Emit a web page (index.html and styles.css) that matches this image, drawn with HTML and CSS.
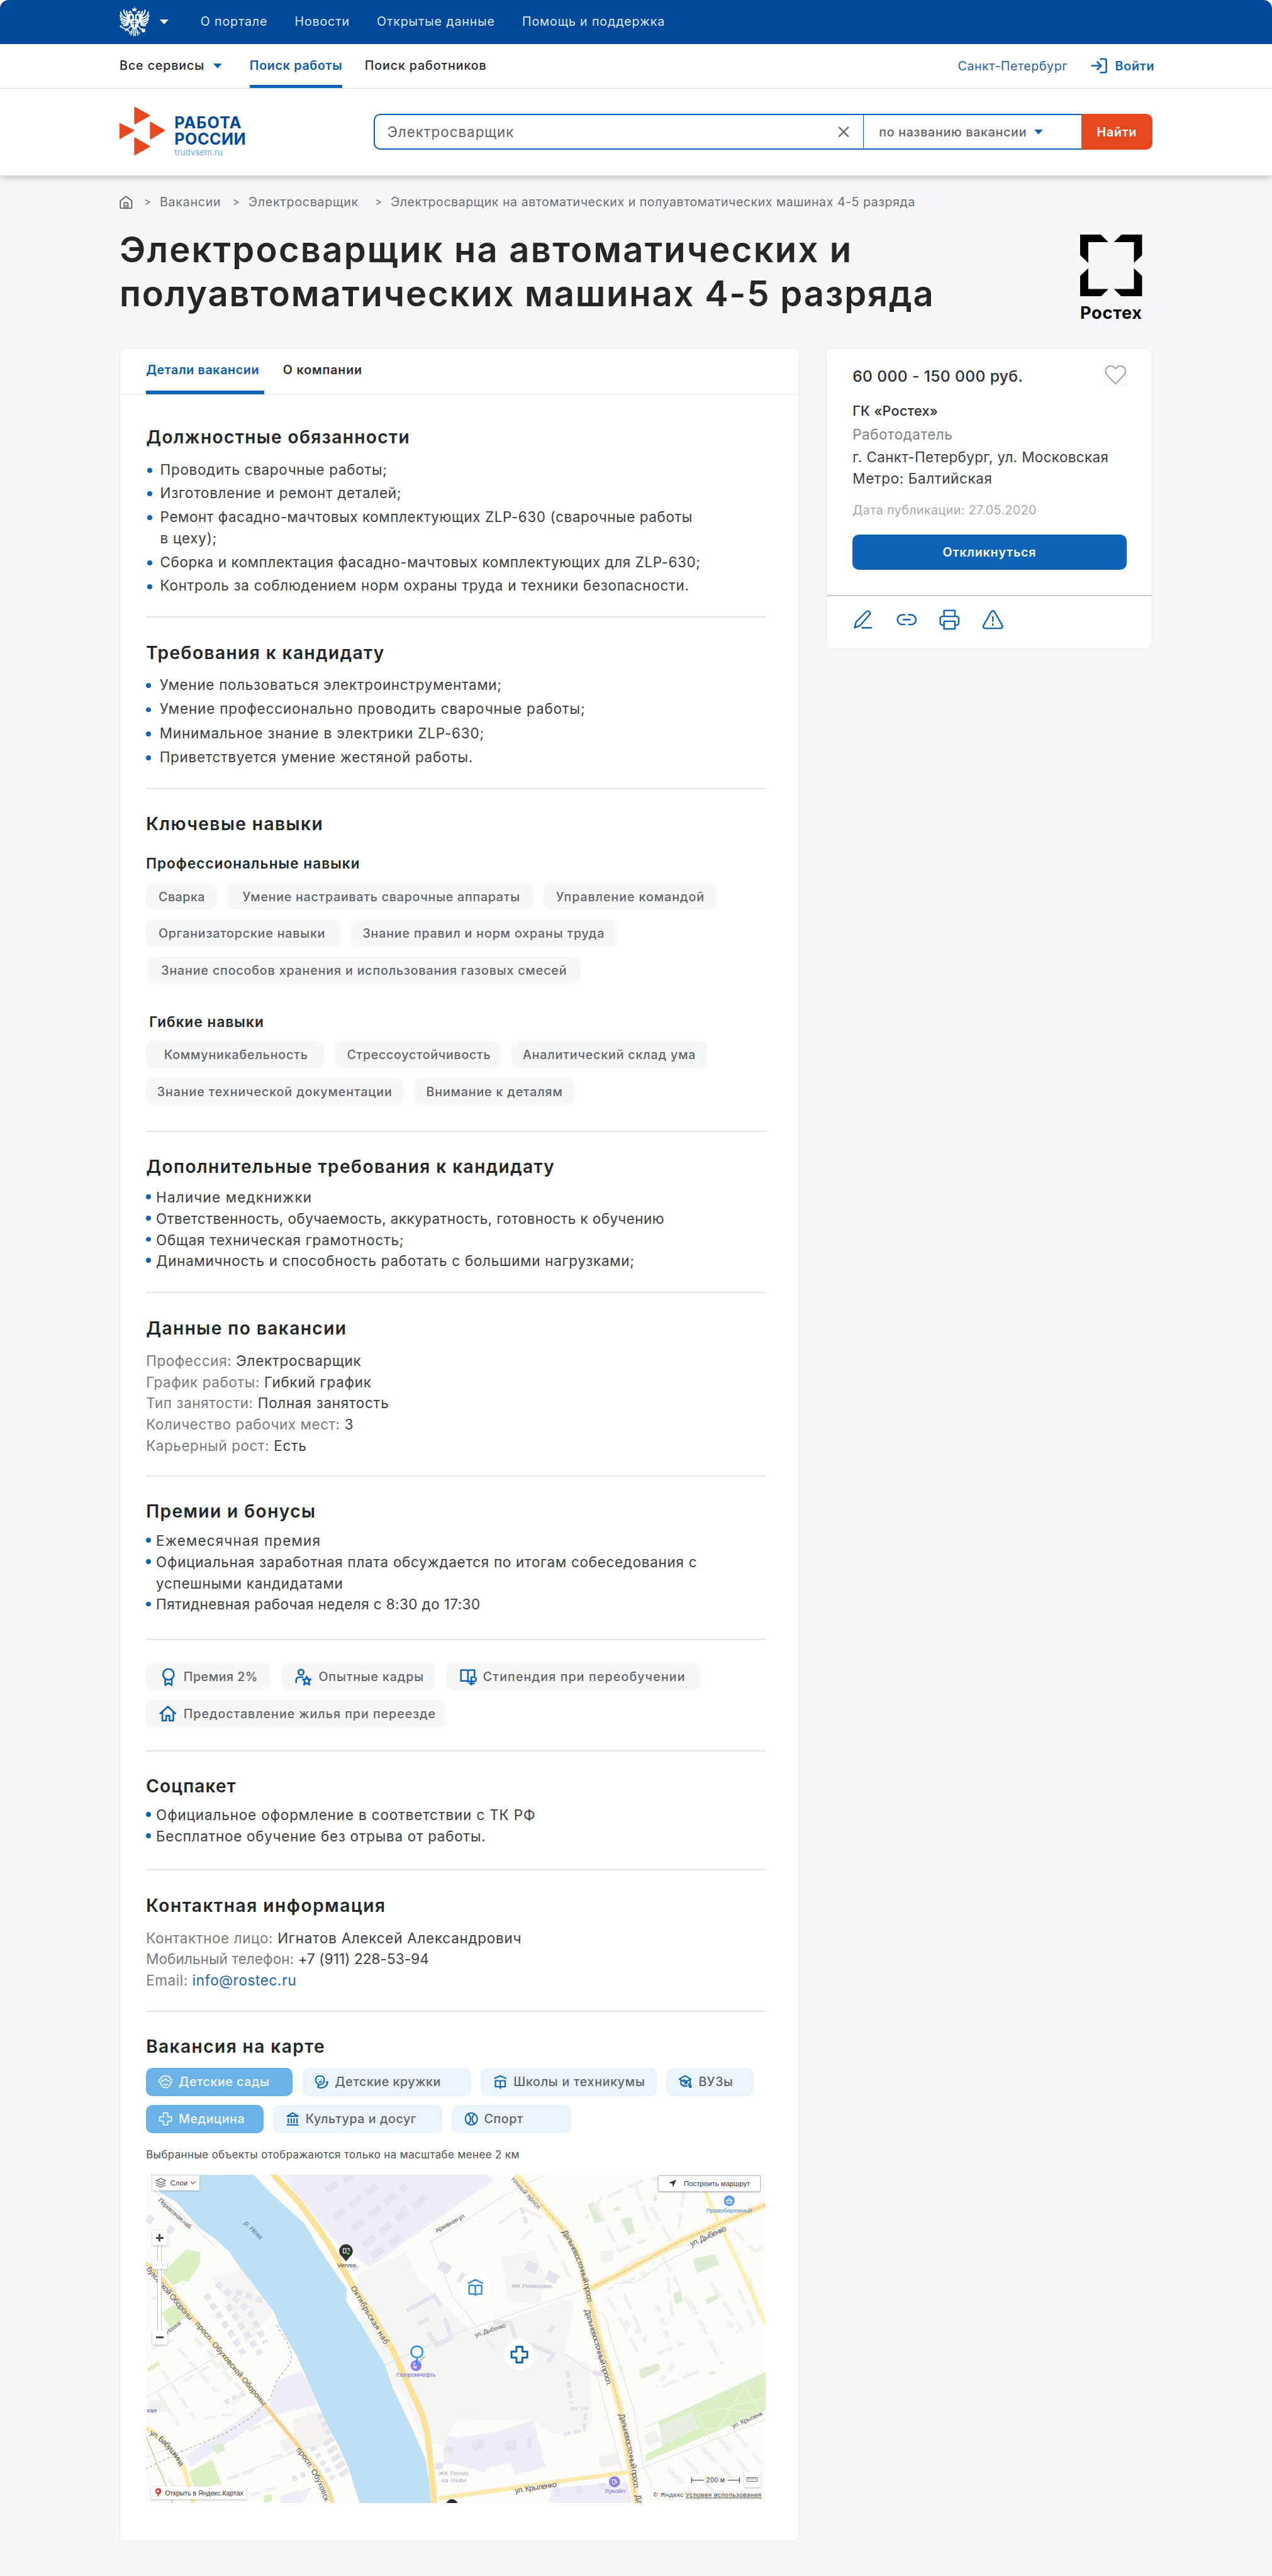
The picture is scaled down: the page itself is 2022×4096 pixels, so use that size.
FILE: index.html
```html
<!DOCTYPE html>
<html lang="ru">
<head>
<meta charset="utf-8">
<title>Работа России — Электросварщик</title>
<link rel="stylesheet" href="styles.css">
</head>
<body>
<div class="page">
  <header class="header">
    <div class="topbar">
      <svg class="eagle" viewBox="0 0 56 57" fill="none" stroke="#f3f6fb" stroke-linecap="round">
        <g id="half">
          <path stroke-width="2.6" d="M2 11c1 6 4 9 11 11M1 17c2 6 6 8 12 9M2 24c3 4 7 5 12 5M4 30c3 3 6 3 10 2M7 35c3 1 5 1 8-1M8 7c0 6 3 10 9 12M13 9c0 4 2 7 6 9"/>
          <path stroke-width="3.4" d="M14 20c2 4 2 9 1 14M18 19c-1 6 0 9 3 12"/>
          <path stroke-width="3" d="M25 32V19c0-3-2-4-5-4l-3 1"/>
          <path stroke-width="2.2" d="M17 11h5M19.500 9v2.500M22 14l3 2"/>
          <path stroke-width="2" d="M22 35c-3 3-5 6-7 8M24 42c-1 4-4 6-6 8M26 44v10M23 46c0 3-1 5-2 7M14 41l-3 4"/>
        </g>
        <use href="#half" transform="matrix(-1 0 0 1 55 0)"/>
        <path stroke-width="2" d="M2.500 37.500L18 46"/>
        <path fill="#f3f6fb" stroke-width="1" d="M24 4.500h7l-1 4h-5zM27.500 1v3M21 24h13v11c0 4-4 6-6.500 8-2.500-2-6.500-4-6.500-8z"/>
        <circle cx="2.500" cy="37" r="2" fill="#f3f6fb" stroke="none"/>
        <circle cx="44" cy="44.500" r="3.400" fill="#f3f6fb" stroke="none"/>
        <path stroke="#00489a" stroke-width="1.400" d="M24.500 28h6M24.500 32h6M27.500 26v12"/>
      </svg>
      <svg class="caret caret-light" viewBox="0 0 16 9"><path d="M0 0h16l-8 9z" fill="#fff"/></svg>
      <nav class="topnav"><a>О портале</a><a>Новости</a><a>Открытые данные</a><a>Помощь и поддержка</a></nav>
    </div>
    <div class="services">
      <a class="service">Все сервисы</a>
      <svg class="caret caret-blue" viewBox="0 0 16 9"><path d="M0 0h16l-8 9z" fill="#0d64b6"/></svg>
      <a class="service service-active">Поиск работы</a>
      <a class="service">Поиск работников</a>
      <a class="city">Санкт-Петербург</a>
      <svg class="login-icon" viewBox="0 0 30 29" fill="none" stroke="#0d64b6" stroke-width="3" stroke-linecap="round" stroke-linejoin="round"><path d="M18 2h7.500a3 3 0 0 1 3 3v19a3 3 0 0 1-3 3H18M2 14.500h17M12 7.500l7 7-7 7"/></svg>
      <a class="login">Войти</a>
    </div>
    <div class="search-row">
      <div class="logo">
        <svg class="logo-mark" viewBox="0 0 84 89" fill="#e5481f"><path d="M27 1.500v29a1.500 1.500 0 0 0 2.500 1L56 16.500a1 1 0 0 0 0-1.500L29.500.5a1.500 1.500 0 0 0-2.500 1zM0 29.500v30l27-15.500a1 1 0 0 0 0-1.500zM56 28v31a1 1 0 0 0 1.500.5l26-15.500a1 1 0 0 0 0-1.500l-26-15a1 1 0 0 0-1.500.5zM27 57v31a1 1 0 0 0 2 .5l27-15a1 1 0 0 0 0-1.500L29 56.500a1.500 1.500 0 0 0-2 .5z"/></svg>
        <div class="logo-text"><div class="logo-a">РАБОТА</div><div class="logo-b">РОССИИ</div><div class="logo-site">trudvsem.ru</div></div>
      </div>
      <div class="search">
        <div class="search-field"><span>Электросварщик</span>
          <svg class="clear" viewBox="0 0 21 20" stroke="#63676c" stroke-width="2.600"><path d="M1.500 1l18 18M19.500 1l-18 18"/></svg></div>
        <div class="search-by"><span>по названию вакансии</span><svg class="caret" viewBox="0 0 16 9"><path d="M0 0h16l-8 9z" fill="#0d64b6"/></svg></div>
        <button class="search-btn">Найти</button>
      </div>
    </div>
  </header>

  <main class="main">
    <nav class="crumbs">
      <svg class="home" viewBox="0 0 24 25" fill="none" stroke="#63676c" stroke-width="2.300" stroke-linejoin="round"><path d="M1.500 9.500L12 1.500l10.500 8v12a2 2 0 0 1-2 2h-17a2 2 0 0 1-2-2zM8.500 23.500v-9a1.500 1.500 0 0 1 1.500-1.500h4a1.500 1.500 0 0 1 1.500 1.500v9M12 17v6"/></svg>
      <span class="sep">&gt;</span><a class="c1">Вакансии</a><span class="sep">&gt;</span><a class="c2">Электросварщик</a><span class="sep">&gt;</span><a class="c3">Электросварщик на автоматических и полуавтоматических машинах 4-5 разряда</a>
    </nav>
    <div class="title-row">
      <h1><span class="t1">Электросварщик на автоматических и</span><br>полуавтоматических машинах 4-5 разряда</h1>
      <div class="company-logo">
        <svg viewBox="0 0 114 114"><path d="M0 0h38l14 14H15v38L0 38zM114 0H76L62 14h37v38l15-14zM0 114h38l14-14H15V62L0 76zM114 114H76l-14-14h37V62l15 14z"/></svg>
        <div>Ростех</div>
      </div>
    </div>

    <div class="columns">
      <article class="card details">
        <div class="tabs"><a class="tab tab-active">Детали вакансии</a><a class="tab">О компании</a></div>

        <section class="section s-duties">
          <h2>Должностные обязанности</h2>
          <ul class="list list-wide">
            <li>Проводить сварочные работы;</li><li>Изготовление и ремонт деталей;</li>
            <li><span class="snug">Ремонт фасадно-мачтовых комплектующих ZLP-630 (сварочные работы</span><br>в цеху);</li>
            <li><span class="snug">Сборка и комплектация фасадно-мачтовых комплектующих для ZLP-630;</span></li>
            <li>Контроль за соблюдением норм охраны труда и техники безопасности.</li>
          </ul>
        </section>
        <section class="section s-req">
          <h2>Требования к кандидату</h2>
          <ul class="list list-wide">
            <li>Умение пользоваться электроинструментами;</li><li class="loose">Умение профессионально проводить сварочные работы;</li>
            <li class="loose">Минимальное знание в электрики ZLP-630;</li><li>Приветствуется умение жестяной работы.</li>
          </ul>
        </section>
        <section class="section s-skills">
          <h2>Ключевые навыки</h2>
          <h3>Профессиональные навыки</h3>
          <div class="chips chips-pro"><span>Сварка</span><span>Умение настраивать сварочные аппараты</span><span>Управление командой</span><span>Организаторские навыки</span><span>Знание правил и норм охраны труда</span><span>Знание способов хранения и использования газовых смесей</span></div>
          <h3 class="h3-soft">Гибкие навыки</h3>
          <div class="chips chips-soft"><span>Коммуникабельность</span><span>Стрессоустойчивость</span><span>Аналитический склад ума</span><span>Знание технической документации</span><span>Внимание к деталям</span></div>
        </section>
        <section class="section s-extra">
          <h2>Дополнительные требования к кандидату</h2>
          <ul class="list">
            <li class="airy">Наличие медкнижки</li><li class="tight">Ответственность, обучаемость, аккуратность, готовность к обучению</li><li>Общая техническая грамотность;</li><li>Динамичность и способность работать с большими нагрузками;</li>
          </ul>
        </section>
        <section class="section s-data">
          <h2>Данные по вакансии</h2>
          <dl class="props">
            <div><dt>Профессия:</dt> <dd>Электросварщик</dd></div><div><dt>График работы:</dt> <dd>Гибкий график</dd></div><div><dt>Тип занятости:</dt> <dd>Полная занятость</dd></div><div><dt>Количество рабочих мест:</dt> <dd>3</dd></div><div><dt>Карьерный рост:</dt> <dd>Есть</dd></div>
          </dl>
        </section>
        <section class="section s-bonus">
          <h2>Премии и бонусы</h2>
          <ul class="list">
            <li class="airy">Ежемесячная премия</li><li>Официальная заработная плата обсуждается по итогам собеседования с<br>успешными кандидатами</li><li class="tight">Пятидневная рабочая неделя с 8:30 до 17:30</li>
          </ul>
        </section>
        <section class="section s-benefits">
          <div class="chips chips-icons">
            <span><svg viewBox="0 0 32 34"><circle cx="16" cy="12" r="10"/><path d="M10 20v12l6-4 6 4V20"/></svg>Премия 2%</span>
            <span><svg viewBox="0 0 32 34"><circle cx="11" cy="8" r="5"/><path d="M2 27v-4c0-4 3-6 8-6h4M21.500 16l2 5h5l-3.500 4 1.500 6-5-3-5 3 1.500-6-3.500-4h5z"/></svg>Опытные кадры</span>
            <span><svg viewBox="0 0 32 34"><path d="M14 24H2V4h9c2 0 4 1 4 3v19M15 7c0-2 2-3 4-3h8v10M21 31V17h5a4 4 0 0 1 0 8h-8M18 29h8"/></svg>Стипендия при переобучении</span>
            <span><svg viewBox="0 0 32 34"><path d="M2 17L16 4l14 13M6 14v16h7v-9h6v9h7V14"/></svg>Предоставление жилья при переезде</span>
          </div>
        </section>
        <section class="section s-social">
          <h2>Соцпакет</h2>
          <ul class="list"><li class="loose">Официальное оформление в соответствии с ТК РФ</li><li>Бесплатное обучение без отрыва от работы.</li></ul>
        </section>
        <section class="section s-contacts">
          <h2>Контактная информация</h2>
          <dl class="props"><div><dt>Контактное лицо:</dt> <dd>Игнатов Алексей Александрович</dd></div><div class="phone"><dt>Мобильный телефон:</dt> <dd>+7 (911) 228-53-94</dd></div><div class="email"><dt>Email:</dt> <dd><a>info@rostec.ru</a></dd></div></dl>
        </section>
        <section class="section s-map">
          <h2>Вакансия на карте</h2>
          <div class="pills">
            <span class="on"><svg viewBox="0 0 26 26"><path d="M4 8a3.500 3.500 0 0 0 0 7c1 6 4.500 9 9 9s8-3 9-9a3.500 3.500 0 0 0 0-7c-1-4-4.500-6-9-6S5 4 4 8zM4 12c4 0 7-2 9-5 2 3 5 5 9 5M9 17c2 2 6 2 8 0"/></svg>Детские сады</span>
            <span><svg viewBox="0 0 26 26"><path d="M8 18C4 16 2 13 2 9c0-4 3-7 8-7s8 3 8 7c0 5-3 8-7 9-3 1-5 2-5 4s3 2 6 2c7 0 12-5 12-11l-3 1M7 8v1M13 8v1M8 13c2 1 4 0 5-2"/></svg>Детские кружки</span>
            <span><svg viewBox="0 0 26 26"><path d="M2 7l11-5 11 5M4 11h6c2 0 3 1 3 2 0-1 1-2 3-2h6v11h-6c-2 0-3 1-3 3 0-2-1-3-3-3H4zM13 13v9"/></svg>Школы и техникумы</span>
            <span><svg viewBox="0 0 26 26"><path d="M2 8l11-6 10 6-10 6zM5 11v6c4 4 8 5 12 3M9 9l7 3v4l-4 1M22 9v7l-3 2M22 16l2 8M19 18l3 6"/></svg>ВУЗы</span>
            <span class="on"><svg viewBox="0 0 26 26"><path d="M9 2h8v7h7v8h-7v7H9v-7H2V9h7z"/></svg>Медицина</span>
            <span><svg viewBox="0 0 26 26"><path d="M3 8l10-6 10 6zM5 12v9M10.500 12v9M15.500 12v9M21 12v9M2 24h22"/></svg>Культура и досуг</span>
            <span><svg viewBox="0 0 26 26"><circle cx="13" cy="13" r="11"/><path d="M7 4c6 5 6 13 0 18M19 4c-6 5-6 13 0 18"/></svg>Спорт</span>
          </div>
          <p class="map-note">Выбранные объекты отображаются только на масштабе менее 2 км</p>
          <div class="map">
            <svg class="map-canvas" viewBox="0 0 1140 604">
              <rect width="1140" height="604" fill="#fdfbf8"/>
              <g fill="#efedf6">
                <path d="M248 0H628L640 12 592 42 470 128 412 171 347 122 298 61z"/>
                <path d="M240 380l46-19 27 43v20l-92 21zM72 518l145-98 12 21L83 537z"/>
                <path d="M571 485l72-12 71-21 21 86-57 14-8-22-40 8-5 10-54-14zM747 576l139-10 8 38H740zM547 482h24v50h-24zM247 590l60-15-20 29h-40z"/>
              </g>
              <g fill="#f5f5f3">
                <path d="M389 184l88-41 23 47 100 100 170-62 17 10-17 90 48 22 2 110-70 18-36-26-143-2-24 50-35-10-38-80-38-50-40-90z"/>
                <path d="M125 190l50-18 60 80-50 60z"/><path d="M270 450l50-14 36 50-50 20-30-10z" fill="#f5f1ed"/>
                <path d="M655 150l60-10 20 50-10 50-60-10z"/>
              </g>
              <g fill="#dcefc5">
                <path d="M30 180l45-43 25 6v20l-22 34-13-2-15 10zM28 255l32-23 15 8-2 22-28 20zM79 547l43-23 17 45-50 8zM1 357l21-14 4 6-21 14z"/>
                <path d="M943 454l197-91v70l-222 95 2-14 31-15zM217 590l15-2v12l-15 4z"/>
              </g>
              <g fill="#deecd6"><path d="M812 55l12-4 15 35-13 3zM873 83l19-6 8 28-12 6zM1006 155l41-9 8 19-41 16zM969 220l15-8 4 20-13 7zM906 358l35-10q8 4 3 12l-32 16zM1029 229l22-9 2 7-20 12zM860 62l12-4 2 6-13 4zM933 39l6-1 2 9-7 2zM1035 364l12-4v6l-12 3zM120 500l20-8 6 14-16 8z"/><path d="M945 461l59-24 14 29-69 33z" fill="#e9efe2"/></g>
              <path d="M1011 440l30 50M1020 440l120-30M1040 490l60-100M1060 430l80 10M1100 385l35 60M1020 470l80-10" stroke="#eaf6dc" stroke-width="1.500" fill="none"/>
              <g fill="none" stroke="#e6e5ee">
                <path stroke-width="13" stroke-dasharray="26 12" d="M345 80l80-60M380 100l100-80M400 130l110-85M415 150l60-40M330 30l50-30"/>
                <path stroke-width="11" stroke-dasharray="12 8" d="M130 200l60 50 30 60M150 240l60 90M165 215l60 20M110 220l70 110"/>
                <path stroke-width="10" stroke-dasharray="9 7" d="M320 440l30 70 20 40M305 500l40 60M330 490l35 70M270 560l30-12M145 420l40-20"/>
                <path stroke-width="8" d="M480 250l50-28 12 20M500 275l20-10M520 290l14 24 28-14-12-36M640 272h30l10 28M740 290l10-12M700 310l50 20-10 14"/>
                <path stroke-width="18" stroke-dasharray="22 20" d="M540 165l50 30M700 165l60 30M600 500l40-12M660 500l50-8M840 320l-10 50"/>
                <path stroke-width="7" stroke-dasharray="14 5" d="M780 430h30l-4 40-40 8M775 360l8 60M380 175l14-8M700 90l-10-30"/>
                <path stroke-width="14" stroke-dasharray="12 30" d="M2 80l60 30M540 530l-4 40M560 500l-10 40M750 585l100-12M470 70l60-40"/>
              </g>
              <g fill="none" stroke="#f3efec" stroke-width="6">
                <path stroke-dasharray="22 9" d="M10 230l60-30M90 300l60 60M60 320l70 80M30 360l60 90M20 400l40 60M120 340l60 60-30 30M70 380l50-30M10 320l40-16M160 440l-60 10M190 470l50-20M230 520l60-16M150 560l60-20M190 590l50-14M20 540l40 40"/>
                <path stroke-dasharray="30 12" d="M830 60l40 80 50-20M850 40l60-28 60-10M930 60l40 70M990 30l-10 70M900 20l30 80M880 220l40 90M850 225l60 110M900 190l-50 20M960 190l10 80M1000 230l60 120M1040 200l60 90M1110 190l20 80M950 150l60 110M940 330l50-20M950 390l70-30M1080 100l40 40 20-10M1090 210l30 70M840 40l-30 40"/>
                <path stroke-width="9" stroke-dasharray="14 10" d="M910 180l20 10M880 270l40 30M940 240l20 60M1070 270l20 20M870 350l10 20M970 350l-30 40"/>
                <path stroke-dasharray="40 14" d="M960 540l60 60M990 520l60 70M1020 500l60 60M1050 480l60 70M1080 470l50 60M740 110l40 80M650 90l40-30 40 20M690 120l20-20"/>
                <path stroke-width="22" d="M835 530l34-8M920 490l22-10M848 160v-20M5 425h32M250 500l30-14"/>
              </g>
              <path d="M9 0H198l31 33 46 42 17 15 25 43 34 51 19 26-2 23 29 44 42 72 15 43 31 65 29 65 6 37 5 45H393l-19-61-19-43-27-51-19-45-31-69-34-60-8-22-15-20-19-25-28-36-22-32-27-23-28-20-41-47L26 33z" fill="#bedff4"/>
              <g fill="none" stroke="#e3e5e9" stroke-width="1.500">
                <path d="M9 24l76 66 40 40M0 410l130-75M0 520l50-20M150 560l150-60M440 350l130-58 240-82M524 123l70-42 60-40 80-41M770 330l60 40 60 230M820 250q30 0 32 40l45 140 18 104 30 70M917 465l223-94M900 545l240-95M865 188q20-30 60-40l80-22M860 200l40-2 60-40 60-30M140 0l-20 0M524 123l40 100 80 100"/>
              </g>
              <path d="M0 481l20 50 25 60 4 13" fill="none" stroke="#b5dfae" stroke-width="2"/>
              <path d="M240 277l19 29 9 25-3 16-25 33-11 32-39 37-46 28-76 31-68 33" fill="none" stroke="#b4b4b4" stroke-width="1.500" stroke-dasharray="5 4"/>
              <g fill="none" stroke="#fbe4a0" stroke-linejoin="round">
                <path stroke-width="8" stroke="#fbe9ae" d="M0 465l37 29 31 41 11 36 8 33M539 596l32-5 107-15 97-14 115-15"/>
                <path stroke-width="7" stroke="#fdeeb4" d="M1029 31l26 60 43 88 42 96"/>
                <path stroke-width="12" stroke="#fdecb0" d="M680 0l55 64 32 36 23 36 12 33 6 34 12 43 17 67 20 62 16 58 9 57 12 67 8 47"/>
                <path stroke-width="12" stroke="#fdecb0" d="M812 212l53-26 115-62 81-36 79-33"/>
                <path stroke-width="8" stroke="#fadb9e" d="M0 163l30 29 57 73 65 78 65 79 61 74 39 51 19 33 7 24"/>
                <path stroke-width="11" stroke="#fbe19a" d="M231-4l51 55 54 75 42 74 38 57 38 65 20 45 34 74 10 36 13 127"/>
              </g>
              <path d="M690 10l45 54 32 36 23 36 12 33 6 34 12 43 17 67 20 62 16 58 9 57 12 67 8 47M816 210l49-24 115-62 81-36 79-33M217 422l61 74" fill="none" stroke="#eeb193" stroke-width="1.500" stroke-dasharray="9 2"/>
              <defs>
                <path id="rA" d="M0 174l83 98"/><path id="rB" d="M90 275l127 153"/><path id="rC" d="M276 506q40 50 54 100"/>
                <path id="rD" d="M376 208l66 110"/><path id="rE" d="M6 477q38 22 58 64"/><path id="rF" d="M22 48l60 54"/><path id="rG" d="M40 294l26-20"/>
                <path id="rH" d="M180 90l32 32"/><path id="rI" d="M535 107l58-32"/><path id="rJ" d="M606 299l60-20"/><path id="rK" d="M671 8l54 60"/>
                <path id="rL" d="M765 105q38 60 48 136"/><path id="rM" d="M807 249l42 142"/><path id="rN" d="M870 441q18 60 29 143"/><path id="rO" d="M1003 132l66-30"/>
                <path id="rP" d="M679 586l78-12"/><path id="rQ" d="M1080 466l58-25"/><path id="rR" d="M900 590l8 30"/>
              </defs>
              <g class="road-names">
                <text><textPath href="#rA" textLength="124">буховской Обороны</textPath></text>
                <text><textPath href="#rB" textLength="196">просп. Обуховской Обороны</textPath></text>
                <text><textPath href="#rC" textLength="110">просп. Обуховск</textPath></text>
                <text><textPath href="#rD" textLength="127">Октябрьская наб.</textPath></text>
                <text><textPath href="#rE" textLength="84">ул. Бабушкина</textPath></text>
                <text class="sm"><textPath href="#rF" textLength="80">Перевозная наб.</textPath></text>
                <text class="sm"><textPath href="#rG" textLength="32">Ногина</textPath></text>
                <text class="water"><textPath href="#rH" textLength="42">р. Нева</textPath></text>
                <text class="sm"><textPath href="#rI" textLength="62">Архивная ул.</textPath></text>
                <text class="sm"><textPath href="#rJ" textLength="60">ул. Дыбенко</textPath></text>
                <text class="sm"><textPath href="#rK" textLength="78">точный просп.</textPath></text>
                <text><textPath href="#rL" textLength="142">Дальневосточный просп.</textPath></text>
                <text><textPath href="#rM" textLength="146">Дальневосточный просп.</textPath></text>
                <text><textPath href="#rN" textLength="142">Дальневосточный просп.</textPath></text>
                <text><textPath href="#rR">Да</textPath></text>
                <text><textPath href="#rO" textLength="72">ул. Дыбенко</textPath></text>
                <text><textPath href="#rP" textLength="78">ул. Крыленко</textPath></text>
                <text class="sm"><textPath href="#rQ" textLength="60">ул. Крыленк</textPath></text>
              </g>
              <g class="places" text-anchor="middle">
                <text x="369" y="170" fill="#444">Vervex</text>
                <text x="497" y="372" fill="#7a6ae0" textLength="72">Газпромнефть</text>
                <text x="1073" y="69" fill="#4a90dc" textLength="85">Правобережный</text>
                <text x="863" y="586" fill="#7a6ae0" textLength="38">Лукойл</text>
                <text x="710" y="208" fill="#aba9c8" textLength="76">ЖК Ренессанс</text>
                <text x="566" y="553" fill="#aba9c8" textLength="56">ЖК Полис</text>
                <text x="566" y="566" fill="#aba9c8" textLength="46">на Неве</text>
                <text x="11" y="437" fill="#3f62b5">кая</text>
              </g>
              <path d="M368 159l-8-9a12.500 12.500 0 1 1 16 0z" fill="#333"/><path d="M363 136h5v8h-5zM370 136h4v5" fill="none" stroke="#eee" stroke-width="1.500"/><circle cx="372" cy="145" r="2.500" fill="#43c443"/>
              <circle cx="563" cy="608" r="11" fill="#2c2c2c"/>
              <circle cx="1073" cy="48" r="10" fill="#5ba0ee"/><path d="M1068 47h10l-1.500 5h-7zM1070 47l2-3h2l2 3" fill="none" stroke="#fff" stroke-width="1.500"/>
              <circle cx="862" cy="565" r="10" fill="#8a7bee"/><path d="M858 569v-8h5v8zM863 563l3 1v4" fill="none" stroke="#fff" stroke-width="1.500"/>
              <circle cx="497" cy="351" r="10" fill="#8a7bee"/><path d="M493 355v-8h4v8z" fill="none" stroke="#fff" stroke-width="1.500"/>
              <path d="M498 350l18-17-8 2z" fill="#999" opacity=".5"/><path d="M497 351l2-14" stroke="#2f8df0" stroke-width="3"/><circle cx="498.500" cy="326" r="10.500" fill="#fff" stroke="#2f8df0" stroke-width="3"/>
              <circle cx="606" cy="207" r="28" fill="#fff"/><g fill="none" stroke="#2b86d9" stroke-width="2.600" stroke-linejoin="round"><path d="M592 200l14-7 14 7M594.500 203.500h7c3 0 4.500 1 4.500 3 0-2 1.500-3 4.500-3h7v16h-7c-3 0-4.500 0-4.500 2.500 0-2.500-1.500-2.500-4.500-2.500h-7zM606 206v14"/></g>
              <circle cx="687" cy="331" r="28" fill="#fff"/><path d="M681.500 316.500h11v9h9v11h-9v9h-11v-9h-9v-11h9z" fill="none" stroke="#0d64b6" stroke-width="3.400" stroke-linejoin="round"/>
              <path d="M1004 557v10M1004 562h22M1070 562h22M1092 557v10" stroke="#555" stroke-width="1.600" fill="none"/>
              <text class="scale" x="1048" y="566" text-anchor="middle" textLength="34">200 м</text>
              <text class="legal" x="933" y="593" textLength="56">© Яндекс</text><text class="legal under" x="993" y="593" textLength="139">Условия использования</text>
            </svg>
            <div class="ctl layers"><svg viewBox="0 0 20 20" fill="none" stroke="#666" stroke-width="1.400"><path d="M1 6l9-4 9 4-9 4zM1 10l9 4 9-4M1 14l9 4 9-4"/></svg>Слои<svg class="chev" viewBox="0 0 12 8" fill="none" stroke="#555" stroke-width="1.500"><path d="M1 1l5 5 5-5"/></svg></div>
            <div class="track"></div><div class="ctl zoom-in"></div><div class="ctl knob"></div><div class="ctl zoom-out"></div>
            <div class="ctl open-map"><svg viewBox="0 0 14 18"><path d="M7 17l-1-6A5.500 5.500 0 1 1 9.500 11z" fill="#e8312b"/><circle cx="7" cy="6" r="2.300" fill="#fff"/></svg>Открыть в Яндекс.Картах</div>
            <div class="ctl route"><svg viewBox="0 0 16 16"><path d="M15 1L9 15 8 8 1 7z" fill="#333"/></svg>Построить маршрут</div>
            <div class="ctl ruler"><svg viewBox="0 0 20 8" fill="none" stroke="#555"><path d="M.5.5h19v7H.5zM4 .5v4M7 .5v3M10 .5v4M13 .5v3M16 .5v4"/></svg></div>
          </div>
        </section>
      </article>

      <aside class="card summary">
        <div class="summary-body">
          <div class="price"><span>60 000 - 150 000 руб.</span>
            <svg class="heart" viewBox="0 0 40 39" fill="none" stroke="#a3a9b0" stroke-width="2.600" stroke-linejoin="round"><path d="M20 36.500L4.500 20C.5 15.500.8 9.500 4.500 6c4.500-4.200 11.500-3 15.500 2.500C24 3 31 1.800 35.500 6c3.700 3.500 4 9.500 0 14z"/></svg></div>
          <div class="firm">ГК «Ростех»</div>
          <div class="role">Работодатель</div>
          <div class="addr">г. Санкт-Петербург, ул. Московская<br><span class="metro">Метро: Балтийская</span></div>
          <div class="date">Дата публикации: 27.05.2020</div>
          <button class="apply">Откликнуться</button>
        </div>
        <div class="actions">
          <svg viewBox="0 0 40 40"><path d="M4 35l3-11L25.500 5.500a4 4 0 0 1 6 5.500L14 31zM18 35h17"/></svg>
          <svg viewBox="0 0 40 40"><path d="M16 11h-4a9 9 0 0 0 0 18h4M24 11h4a9 9 0 0 1 0 18h-4M14 20h12"/></svg>
          <svg viewBox="0 0 40 40"><path d="M10 14V3h20v11M10 30H7a4 4 0 0 1-4-4v-8a4 4 0 0 1 4-4h26a4 4 0 0 1 4 4v8a4 4 0 0 1-4 4h-3M10 23h20v14H10z"/></svg>
          <svg viewBox="0 0 40 40"><path d="M17 5.500L2.500 31a3.500 3.500 0 0 0 3 5h29a3.500 3.500 0 0 0 3-5L23 5.500a3.500 3.500 0 0 0-6 0zM20 15v8M20 28v2"/></svg>
        </div>
      </aside>
    </div>
  </main>
</div>
</body>
</html>
```
FILE: styles.css
```css
html { font-size: 8.641px; }
* { box-sizing: border-box; }
body { margin: 0; background: #fff; font-family: Inter, "Noto Sans", sans-serif; color: #3a3e43; }
h1, h2, h3, p, ul, dl, dd { margin: 0; padding: 0; }
button { font: inherit; border: 0; padding: 0; }
svg { display: block; flex: none; }

.page { height: 4096px; overflow: hidden; border-radius: 1.6rem 1.6rem 0 0; background: #f7f7fb; }

/* header */
.header { position: relative; height: 32.3rem; background: #fff; box-shadow: 0 .3rem 1.4rem rgba(40, 42, 50, .32); }
.topbar { height: 8.1rem; padding-left: 22rem; display: flex; align-items: center; background: #00489a; }
.eagle { width: 5.6rem; height: 5.7rem; }
.caret { width: 1.6rem; height: .9rem; }
.caret-light { margin-left: 1.8rem; }
.topnav { display: flex; gap: 5rem; margin-left: 5.9rem; font-size: 2.275rem; letter-spacing: .043em; color: #dfe8f3; }
.topnav a { margin-top: -.2rem; }
.services { height: 8.2rem; padding: 0 21.6rem 0 22rem; display: flex; align-items: center; border-bottom: .2rem solid #e0e1e3; font-size: 2.275rem; }
.service { height: 8.2rem; line-height: 8.3rem; font-weight: 500; letter-spacing: .045em; color: #25292e; }
.caret-blue { margin: 0 5.1rem 0 1.6rem; }
.service-active { margin-right: 4.1rem; font-weight: 600; letter-spacing: .036em; color: #0f59ad; border-bottom: .6rem solid #0d64b6; }
.city { margin-left: auto; letter-spacing: .028em; color: #2563b0; }
.login-icon { width: 3rem; height: 2.9rem; margin: 0 1.5rem 0 4.2rem; }
.login { font-weight: 600; letter-spacing: .04em; color: #0d64b6; }
.search-row { height: 16rem; padding: 0 22rem; display: flex; align-items: center; }
.logo { width: 46.8rem; height: 9.3rem; display: flex; }
.logo-mark { width: 8.4rem; height: 8.9rem; margin-right: 1.7rem; }
.logo-text { padding-top: 1.4rem; line-height: 3.07rem; font-size: 2.9rem; font-weight: 700; color: #00489a; }
.logo-a { letter-spacing: .042em; }
.logo-b { letter-spacing: .02em; }
.logo-site { font-size: 1.55rem; line-height: 1.8rem; font-weight: 400; color: #66aee3; }
.search { flex: 1; display: flex; height: 6.6rem; }
.search-field { flex: 1; display: flex; justify-content: space-between; align-items: center; padding: 0 2.6rem 0 2.2rem; border: 2px solid #0d64b6; border-width: 2px 1px 2px 2px; border-radius: 1.2rem 0 0 1.2rem; font-size: 2.6rem; letter-spacing: .042em; color: #5f6368; }
.clear { width: 2.1rem; height: 2rem; }
.search-by { width: 40rem; display: flex; align-items: center; gap: 1.4rem; padding-left: 2.8rem; border: 2px solid #0d64b6; border-width: 2px 0; font-size: 2.275rem; font-weight: 500; letter-spacing: .036em; color: #5f6368; }
.search-btn { width: 13.1rem; border-radius: 0 1.2rem 1.2rem 0; background: #e5481f; color: #fff; font-size: 2.275rem; font-weight: 600; letter-spacing: .036em; }

/* page head */
.main { padding: 2.7rem 22rem 0; }
.crumbs { height: 4.4rem; display: flex; align-items: center; font-size: 2.275rem; letter-spacing: .037em; color: #6a6e74; white-space: nowrap; }
.home { width: 2.4rem; height: 2.5rem; }
.sep { width: 5rem; text-align: center; font-size: 1.95rem; padding-left: .6rem; }
.c2 { margin-right: .9rem; }
.c3 { letter-spacing: .0255em; }
.title-row { display: flex; justify-content: space-between; margin-top: 2.45rem; }
h1 { font-size: 6.5rem; line-height: 8.16rem; font-weight: 600; letter-spacing: .032em; color: #23272b; white-space: nowrap; }
.t1 { letter-spacing: .039em; }
.company-logo { width: 11.5rem; margin: 1.3rem 1.8rem 0 0; font-size: 3.15rem; line-height: 4rem; font-weight: 700; letter-spacing: .025em; color: #000; }
.company-logo svg { width: 11.4rem; height: 11.4rem; margin-bottom: 1.1rem; }
.columns { display: flex; align-items: flex-start; justify-content: space-between; margin-top: 4.36rem; }
.card { background: #fff; border: .2rem solid #e9e9ed; border-radius: 1.2rem; }

/* details */
.details { width: 125.1rem; height: 403.7rem; }
.tabs { height: 8.6rem; display: flex; gap: 3.4rem; padding-left: 4.75rem; border-bottom: .2rem solid #ececef; }
.tab { height: 8.5rem; line-height: 8.1rem; font-size: 2.275rem; font-weight: 600; letter-spacing: .043em; color: #2b2f34; }
.tab-active { width: 21.8rem; letter-spacing: .033em; color: #0f59ad; border-bottom: .7rem solid #0d64b6; }
.section { margin-left: 4.75rem; width: 114rem; padding-top: 4.44rem; border-bottom: .3rem solid #e3e4e6; }
h2 { font-size: 3.25rem; line-height: 4rem; font-weight: 600; letter-spacing: .051em; color: #23272b; white-space: nowrap; }
h3 { font-size: 2.6rem; line-height: 3.6rem; font-weight: 600; letter-spacing: .049em; color: #23272b; }
.list { list-style: none; font-size: 2.6rem; line-height: 3.9rem; letter-spacing: .032em; white-space: nowrap; }
.list li { position: relative; padding-left: 1.85rem; }
.list li::before { content: ""; position: absolute; left: 0; top: 1.4rem; width: .9rem; height: .9rem; border-radius: 50%; background: #0d64b6; }
.list-wide { line-height: 4rem; letter-spacing: .031em; }
.list-wide li { padding-left: 2.5rem; }
.list-wide li::before { top: 1.65rem; }
.snug { letter-spacing: .026em; }
.list .loose { letter-spacing: .038em; }
.list .airy { letter-spacing: .053em; }
.list .tight { letter-spacing: .019em; }

.s-duties { padding-top: 5.8rem; padding-bottom: 3.6rem; }
.s-duties h2 { margin-bottom: 1.92rem; letter-spacing: .048em; }
.s-duties li { padding-left: 2.6rem; margin-bottom: .35rem; }
.s-duties li::before { left: .2rem; }
.s-duties li:last-child, .s-req li:last-child { margin-bottom: 0; }
.s-req { padding-bottom: 3.63rem; }
.s-req h2 { margin-bottom: 1.95rem; }
.s-req li { margin-bottom: .44rem; }
.s-skills { padding-bottom: 4.65rem; }
.s-skills h2 { margin-bottom: 3.42rem; }
.s-skills h3 { margin-bottom: 1.76rem; }
.s-skills .h3-soft { margin-top: 5.08rem; padding-left: .6rem; }
.s-extra { padding-bottom: 3.76rem; }
.s-extra h2 { margin-bottom: 1.7rem; }
.s-data { padding-bottom: 3.53rem; }
.s-data h2, .s-contacts h2 { margin-bottom: 2.02rem; }
.s-bonus { padding-bottom: 4.36rem; }
.s-bonus h2 { margin-bottom: 1.46rem; }
.s-benefits { padding-top: 4.24rem; padding-bottom: 4.14rem; }
.s-social { padding-bottom: 4.1rem; }
.s-social h2 { margin-bottom: 1.37rem; letter-spacing: .04em; }
.s-contacts { padding-bottom: 3.6rem; }
.s-contacts h2 { letter-spacing: .055em; }
.s-map { border: 0; }
.s-map h2 { margin-bottom: 1.89rem; }

.chips { display: flex; flex-wrap: wrap; gap: 1.75rem 1.85rem; }
.chips span { height: 5.05rem; padding-left: 2.3rem; display: flex; align-items: center; border-radius: 1.2rem; background: #f8f8fb; font-size: 2.275rem; font-weight: 500; letter-spacing: .042em; color: #5f646b; white-space: nowrap; }
.chips-pro span:nth-child(1) { width: 13.1rem; letter-spacing: .026em; }
.chips-pro span:nth-child(2) { width: 56.3rem; padding-left: 2.8rem; letter-spacing: .038em; }
.chips-pro span:nth-child(3) { width: 31.8rem; letter-spacing: .047em; }
.chips-pro span:nth-child(4) { width: 35.9rem; }
.chips-pro span:nth-child(5) { width: 48.9rem; padding-left: 2.1rem; }
.chips-pro span:nth-child(6) { width: 79.7rem; margin-left: .2rem; padding-left: 2.6rem; letter-spacing: .043em; }
.chips-soft span:nth-child(1) { width: 32.7rem; padding-left: 3.3rem; }
.chips-soft span:nth-child(2) { width: 30.8rem; padding-left: 2.4rem; letter-spacing: .036em; }
.chips-soft span:nth-child(3) { width: 36.1rem; padding-left: 2.1rem; }
.chips-soft span:nth-child(4) { width: 47.4rem; padding-left: 2.05rem; letter-spacing: .046em; }
.chips-soft span:nth-child(5) { width: 29.5rem; }
.chips-icons { column-gap: 1.95rem; }
.chips-icons svg { width: 3.2rem; height: 3.4rem; margin-right: .9rem; fill: none; stroke: #0d64b6; stroke-width: 3; stroke-linejoin: round; stroke-linecap: round; }
.chips-icons span:nth-child(1) { width: 23rem; padding-left: 2.5rem; margin-right: 0; letter-spacing: .028em; }
.chips-icons span:nth-child(1) svg { margin-right: 1.2rem; }
.chips-icons span:nth-child(2) { width: 28.3rem; padding-left: 2.5rem; letter-spacing: .043em; }
.chips-icons span:nth-child(2) svg { margin-right: 1.1rem; }
.chips-icons span:nth-child(3) { width: 46.8rem; padding-left: 2.5rem; letter-spacing: .057em; }
.chips-icons span:nth-child(3) svg { margin-right: 1.1rem; }
.chips-icons span:nth-child(4) { width: 55.2rem; padding-left: 2.4rem; letter-spacing: .049em; }
.chips-icons span:nth-child(4) svg { margin-right: 1.3rem; }

.props { font-size: 2.6rem; line-height: 3.9rem; letter-spacing: .033em; white-space: nowrap; }
.props dt, .props dd { display: inline; }
.props dt { color: #767a80; letter-spacing: .026em; }
.props .phone, .props .phone dt { letter-spacing: .005em; }
.props .email { letter-spacing: .03em; }
.props a { color: #1f62b2; }

.pills { display: flex; flex-wrap: wrap; gap: 1.6rem 1.75rem; }
.pills span { height: 5.2rem; padding-left: 2.3rem; display: flex; align-items: center; border-radius: 1.2rem; background: #ebf4fc; font-size: 2.275rem; font-weight: 500; letter-spacing: .028em; color: #5f646b; white-space: nowrap; }
.pills .on { background: #6bb2e8; color: #f4f9fe; }
.pills svg { width: 2.6rem; height: 2.6rem; margin-right: 1.1rem; fill: none; stroke: #0d64b6; stroke-width: 2.4; stroke-linejoin: round; }
.pills .on svg { stroke: #f4f9fe; stroke-width: 2; }
.pills span:nth-child(1) { width: 27rem; }
.pills span:nth-child(2) { width: 31.1rem; }
.pills span:nth-child(3) { width: 32.4rem; letter-spacing: .036em; }
.pills span:nth-child(4) { width: 16rem; padding-left: 2.2rem; }
.pills span:nth-child(5) { width: 21.6rem; }
.pills span:nth-child(6) { width: 31.1rem; }
.pills span:nth-child(7) { width: 22rem; }
.map-note { margin-top: 2.55rem; font-size: 1.95rem; line-height: 3rem; letter-spacing: .026em; color: #4a4e53; white-space: nowrap; }

/* map */
.map { position: relative; height: 60.4rem; margin-top: 2.1rem; overflow: hidden; font-family: "Liberation Sans", Arial, sans-serif; color: #333; }
.map-canvas { width: 114rem; height: 60.4rem; }
.road-names { font-size: 14.5px; fill: #555; stroke: #fff; stroke-width: 2px; stroke-opacity: .5; paint-order: stroke; }
.road-names .sm { font-size: 11.5px; }
.road-names .water { font-size: 12.5px; font-style: italic; fill: #3f7cc4; stroke: none; }
.places { font-size: 11.5px; }
.scale { font-size: 12px; fill: #333; }
.legal { font-size: 11.5px; fill: #333; }
.under { text-decoration: underline; }
.ctl { position: absolute; display: flex; align-items: center; justify-content: center; background: #fff; box-shadow: 0 .1rem .3rem rgba(0, 0, 0, .25); white-space: nowrap; }
.layers { left: 1.1rem; top: .2rem; width: 8.7rem; height: 2.7rem; gap: .8rem; font-size: 1.3rem; }
.layers svg { width: 2rem; height: 2rem; }
.layers .chev { width: 1.1rem; height: .7rem; margin-left: -.3rem; }
.zoom-in, .zoom-out { left: 1.1rem; width: 2.8rem; height: 2.7rem; }
.zoom-in { top: 10.3rem; }
.zoom-out { top: 28.6rem; }
.zoom-in::before, .zoom-out::before { content: ""; width: 1.4rem; height: .4rem; background: #4a4a4a; }
.zoom-in::after { content: ""; position: absolute; width: .4rem; height: 1.4rem; background: #4a4a4a; }
.track { position: absolute; left: 2.1rem; top: 13rem; width: .8rem; height: 15.6rem; background: #fff; border: .15rem solid #c5c5c5; border-width: 0 .15rem; }
.knob { left: 1.1rem; top: 15.9rem; width: 2.8rem; height: 1.5rem; }
.knob::before { content: ""; width: 1.1rem; height: .5rem; border: solid #ccc; border-width: 0 .1rem; }
.open-map { left: .9rem; top: 57.4rem; width: 17.6rem; height: 2.4rem; gap: .6rem; font-size: 1.22rem; }
.open-map svg { width: 1.4rem; height: 1.8rem; }
.route { left: 94.2rem; top: .1rem; width: 18.8rem; height: 3rem; gap: 1.3rem; border: .1rem solid #c4c4c4; border-radius: .3rem; font-size: 1.32rem; }
.route svg { width: 1.6rem; height: 1.6rem; }
.ruler { left: 110rem; top: 54.7rem; width: 3.1rem; height: 2.9rem; }
.ruler svg { width: 2rem; height: .8rem; }

/* summary */
.summary { width: 60rem; height: 55.4rem; }
.summary-body { height: 45.6rem; padding: 3.15rem 4.65rem 0 4.72rem; border-bottom: .24rem solid #c9cacd; }
.price { display: flex; justify-content: space-between; height: 4rem; line-height: 4rem; font-size: 2.85rem; font-weight: 500; letter-spacing: .015em; color: #2b2f34; white-space: nowrap; }
.heart { width: 4rem; height: 3.9rem; margin-top: -.3rem; outline: 1px solid #f0f1f2; }
.firm { margin-top: 2.46rem; font-size: 2.5rem; line-height: 3.9rem; font-weight: 500; letter-spacing: .013em; color: #2b2f34; }
.role { margin-top: .34rem; font-size: 2.6rem; line-height: 3.9rem; letter-spacing: .024em; color: #7d8186; }
.addr { margin-top: .31rem; font-size: 2.6rem; line-height: 3.9rem; letter-spacing: .016em; white-space: nowrap; }
.metro { letter-spacing: .028em; }
.date { margin-top: 2.22rem; font-size: 2.275rem; line-height: 3.4rem; letter-spacing: .021em; color: #a4a8ad; }
.apply { display: block; width: 100%; height: 6.5rem; margin-top: 2.81rem; border-radius: 1.2rem; background: #0d64b6; color: #fff; font-size: 2.275rem; font-weight: 600; letter-spacing: .042em; }
.actions { display: flex; gap: 3.95rem; padding: 2.35rem 0 0 4.7rem; }
.actions svg { width: 4rem; height: 4rem; fill: none; stroke: #0d64b6; stroke-width: 2.8; stroke-linejoin: round; stroke-linecap: round; }
```
